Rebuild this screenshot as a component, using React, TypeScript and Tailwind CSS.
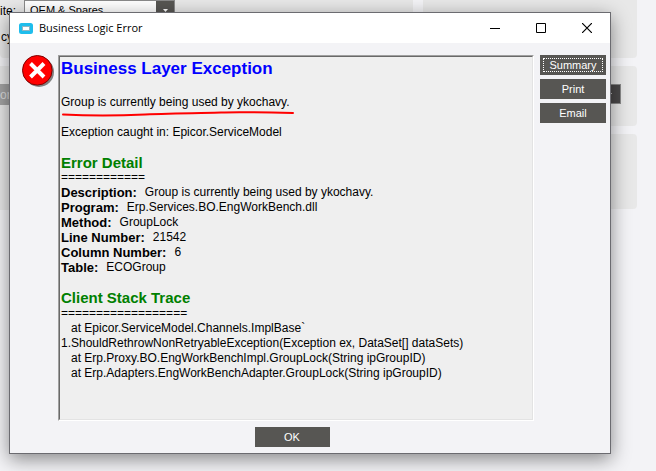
import type { ReactNode } from "react";

const details = [
  { label: "Description:", value: "Group is currently being used by ykochavy." },
  { label: "Program:", value: "Erp.Services.BO.EngWorkBench.dll" },
  { label: "Method:", value: "GroupLock" },
  { label: "Line Number:", value: "21542" },
  { label: "Column Number:", value: "6" },
  { label: "Table:", value: "ECOGroup" },
];

function ErrorIcon() {
  return (
    <svg className="h-8 w-8 shrink-0" viewBox="0 0 32 32" aria-label="Error">
      <circle cx="17" cy="17" r="15" fill="#808080" />
      <circle cx="15.3" cy="15.3" r="14.8" fill="#ff0000" stroke="#800000" strokeWidth="1" />
      <path d="M8.5 8.5 22 22M22 8.5 8.5 22" stroke="#fff" strokeWidth="4" />
    </svg>
  );
}

function DarkButton({ children, className = "" }: { children: ReactNode; className?: string }) {
  return (
    <button type="button" className={`flex h-5 items-center justify-center bg-[#575653] text-[11px] text-white ${className}`}>
      {children}
    </button>
  );
}

function DropArrow() {
  return (
    <svg className="h-[3px] w-[5px]" viewBox="0 0 5 3" aria-hidden="true">
      <path d="M0 0h5L2.5 3z" fill="#fff" />
    </svg>
  );
}

function Background() {
  return (
    <div className="grid min-h-screen grid-cols-[minmax(0,1fr)_214px] content-start gap-x-2.5 pr-[19px]">
      <div className="flex flex-col gap-2">
        <div className="flex h-[58px] flex-col rounded-b bg-[#e8e8e8] text-xs">
          <div className="flex h-[21px] shrink-0 items-center">
            <label htmlFor="site" className="w-6">ite:</label>
            <div className="grid h-full w-[151px] grid-cols-[1fr_18px] border border-[#8a8a8a] bg-white">
              <select id="site" className="appearance-none pl-[5px] text-[11px]">
                <option>OEM &amp; Spares</option>
              </select>
              <span className="flex items-center justify-center bg-[#575653]">
                <DropArrow />
              </span>
            </div>
          </div>
          <span className="pl-px pt-2 leading-4">cy:</span>
        </div>
        <div className="h-36 bg-[#e8e8e8] pt-[18px]">
          <div className="flex h-[21px] items-center bg-[#a3a3a3] text-xs text-[#dcdcdc]">or</div>
        </div>
      </div>
      <div className="flex flex-col gap-2">
        <div className="h-[58px] rounded-b bg-[#e8e8e8]" />
        <div className="h-[60px] rounded bg-[#e8e8e8] pt-[18px]">
          <div className="ml-auto mr-4 flex h-5 w-[23px] items-center justify-center border border-[#8a8a8a] bg-[#4a4849]">
            <DropArrow />
          </div>
        </div>
        <div className="h-[75px] rounded bg-[#e8e8e8]" />
      </div>
    </div>
  );
}

function Message() {
  return (
    <div className="min-w-0 flex-1 border border-b-white border-l-[#a0a0a0] border-r-white border-t-[#a0a0a0]">
      <div className="h-full min-h-[364px] border border-b-[#e3e3e3] border-l-[#696969] border-r-[#e3e3e3] border-t-[#696969] bg-[#efefef] px-px text-xs leading-[15px]">
        <h1 className="pt-0.5 text-[17px] font-bold leading-[20px] text-[#0000ff]">Business Layer Exception</h1>
        <p className="mt-4">Group is currently being used by ykochavy.</p>
        <svg className="h-[7px] w-[236px]" viewBox="0 0 236 7" aria-hidden="true">
          <path d="M2 4.500C28 6 55 6 84 4.500S150 3 160 2.500S190 2 232 3" fill="none" stroke="#f00" strokeWidth="2" strokeLinecap="round" />
        </svg>
        <p className="mt-2">Exception caught in: Epicor.ServiceModel</p>
        <h2 className="mt-[15px] text-[15px] font-bold leading-[15px] text-[#008000]">Error Detail</h2>
        <p>============</p>
        <dl>
          {details.map((d) => (
            <div key={d.label} className="flex gap-2">
              <dt className="text-[13px] font-bold leading-[15px]">{d.label}</dt>
              <dd>{d.value}</dd>
            </div>
          ))}
        </dl>
        <h2 className="mt-[15px] text-[15px] font-bold leading-[15px] text-[#008000]">Client Stack Trace</h2>
        <p className="leading-4">==================</p>
        <p className="whitespace-pre-wrap">
          {"   at Epicor.ServiceModel.Channels.ImplBase`\n1.ShouldRethrowNonRetryableException(Exception ex, DataSet[] dataSets)\n   at Erp.Proxy.BO.EngWorkBenchImpl.GroupLock(String ipGroupID)\n   at Erp.Adapters.EngWorkBenchAdapter.GroupLock(String ipGroupID)"}
        </p>
      </div>
    </div>
  );
}

function Dialog() {
  return (
    <div role="dialog" aria-label="Business Logic Error" className="absolute left-[9px] right-[45px] top-3 border border-[#6b6b70] bg-[#f3f3f6] shadow-[0_5px_18px_rgba(0,0,0,0.45)]">
      <header className="flex h-[30px] items-center bg-white pl-[9px]">
        <svg className="mr-1.5 h-[11px] w-3.5" viewBox="0 0 14 11" aria-hidden="true">
          <rect x="1.500" y="1.500" width="11" height="8" rx="1" fill="#fff" stroke="#1fbdec" strokeWidth="3" />
          <rect x="3.500" y="3.500" width="7" height="4" fill="#fff" stroke="#8fb5c4" />
        </svg>
        <span className="flex-1 font-['Open_Sans','Noto_Sans',sans-serif] text-[11px]">Business Logic Error</span>
        <button type="button" aria-label="Minimize" className="flex h-full w-[46px] items-center justify-center">
          <svg width="10" height="10" viewBox="0 0 10 10"><path d="M0 5.500h10" stroke="#000" /></svg>
        </button>
        <button type="button" aria-label="Maximize" className="flex h-full w-[46px] items-center justify-center">
          <svg width="10" height="10" viewBox="0 0 10 10"><path d="M.5.5h9v9h-9z" fill="none" stroke="#000" /></svg>
        </button>
        <button type="button" aria-label="Close" className="flex h-full w-[46px] items-center justify-center">
          <svg width="10" height="10" viewBox="0 0 10 10"><path d="M0 0l10 10M10 0L0 10" stroke="#000" strokeWidth="1.200" /></svg>
        </button>
      </header>
      <div className="flex pl-3 pr-1 pt-3">
        <ErrorIcon />
        <div className="ml-1 flex min-w-0 flex-1 gap-1.5">
          <Message />
          <div className="flex w-[66px] flex-col gap-1">
            <DarkButton className="p-[3px]">
              <span className="flex h-full w-full items-center justify-center border border-dotted border-white">Summary</span>
            </DarkButton>
            <DarkButton>Print</DarkButton>
            <DarkButton>Email</DarkButton>
          </div>
        </div>
      </div>
      <footer className="flex justify-center pb-1.5 pr-9 pt-1.5">
        <DarkButton className="w-[75px]">OK</DarkButton>
      </footer>
    </div>
  );
}

export default function App() {
  return (
    <main className="relative h-screen overflow-hidden bg-[#f3f3f6] font-['Liberation_Sans',Arial,sans-serif] text-black">
      <Background />
      <Dialog />
    </main>
  );
}
